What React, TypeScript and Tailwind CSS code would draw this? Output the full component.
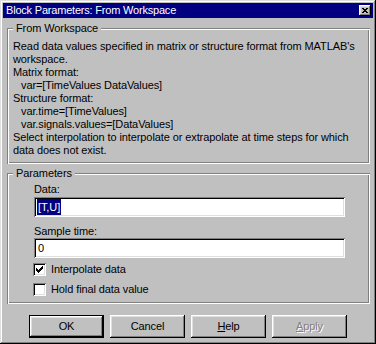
const raised =
  'shadow-[inset_-1px_-1px_#000,inset_1px_1px_#fff,inset_-2px_-2px_#808080,inset_2px_2px_#dfdfdf]';
const sunken =
  'shadow-[inset_1px_1px_#808080,inset_-1px_-1px_#fff,inset_2px_2px_#000,inset_-2px_-2px_#dfdfdf]';
const etched =
  'shadow-[inset_1px_1px_#808080,inset_-1px_-1px_#fff,inset_2px_2px_#fff,inset_-2px_-2px_#808080]';

function GroupBox({ title, className, children }: { title: string; className: string; children: React.ReactNode }) {
  return (
    <div className={`relative ml-[4px] w-[363px] ${etched} ${className}`}>
      <span className="absolute -top-[6px] left-[6px] bg-[#c0c0c0] px-[3px] leading-[13px]">{title}</span>
      {children}
    </div>
  );
}

function CheckBox({ checked, label }: { checked: boolean; label: string }) {
  return (
    <div className="flex items-center h-[13px] gap-[5px] -ml-[1px]">
      <div className={`w-[13px] h-[13px] bg-white ${sunken} flex items-center justify-center`}>
        {checked && (
          <svg width="7" height="7" viewBox="0 0 7 7" shapeRendering="crispEdges">
            <rect x="6" y="0" width="1" height="1" />
            <rect x="5" y="1" width="2" height="1" />
            <rect x="0" y="2" width="1" height="1" />
            <rect x="4" y="2" width="3" height="1" />
            <rect x="0" y="3" width="2" height="1" />
            <rect x="3" y="3" width="3" height="1" />
            <rect x="0" y="4" width="5" height="1" />
            <rect x="1" y="5" width="3" height="1" />
            <rect x="2" y="6" width="1" height="1" />
          </svg>
        )}
      </div>
      <span className="leading-[13px]">{label}</span>
    </div>
  );
}

function Button({ children, isDefault, disabled }: { children: React.ReactNode; isDefault?: boolean; disabled?: boolean }) {
  return (
    <button
      className={`w-[75px] h-[23px] flex items-center justify-center ${isDefault ? 'border border-black' : ''} ${
        disabled ? 'text-[#808080] [text-shadow:1px_1px_0_#fff]' : 'text-black'
      }`}
    >
      <span className={`w-full h-full flex items-center justify-center ${raised}`}>{children}</span>
    </button>
  );
}

export default function App() {
  return (
    <div
      className={`w-[376px] h-[344px] p-[3px] bg-[#c0c0c0] flex flex-col text-black text-[11px] tracking-[-0.1px] font-['Liberation_Sans',Arial,sans-serif] shadow-[inset_-1px_-1px_#000,inset_1px_1px_#dfdfdf,inset_-2px_-2px_#808080,inset_2px_2px_#fff]`}
    >
      {/* Title bar */}
      <div className="h-[15px] bg-[#000080] flex items-center justify-between pl-[3px] pr-[2px]">
        <span className="text-white leading-[15px] tracking-[-0.2px]">Block Parameters: From Workspace</span>
        <div className={`w-[12px] h-[11px] bg-[#c0c0c0] ${raised} flex items-center justify-center`}>
          <svg width="6" height="5" viewBox="0 0 6 5" shapeRendering="crispEdges">
            <rect x="0" y="0" width="2" height="1" />
            <rect x="4" y="0" width="2" height="1" />
            <rect x="1" y="1" width="4" height="1" />
            <rect x="2" y="2" width="2" height="1" />
            <rect x="1" y="3" width="4" height="1" />
            <rect x="0" y="4" width="2" height="1" />
            <rect x="4" y="4" width="2" height="1" />
          </svg>
        </div>
      </div>

      {/* Description */}
      <GroupBox title="From Workspace" className="mt-[10px] h-[136px] pt-[12px] pl-[6px]">
        <div className="leading-[13px]">
          <div>Read data values specified in matrix or structure format from MATLAB's</div>
          <div>workspace.</div>
          <div>Matrix format:</div>
          <div className="pl-[8px]">var=[TimeValues DataValues]</div>
          <div>Structure format:</div>
          <div className="pl-[8px]">var.time=[TimeValues]</div>
          <div className="pl-[8px]">var.signals.values=[DataValues]</div>
          <div>Select interpolation to interpolate or extrapolate at time steps for which</div>
          <div>data does not exist.</div>
        </div>
      </GroupBox>

      {/* Parameters */}
      <GroupBox title="Parameters" className="mt-[9px] h-[131px] pt-[10px] pl-[27px]">
        <div className="leading-[13px]">Data:</div>
        <div className={`mt-[1px] w-[311px] h-[20px] bg-white ${sunken} p-[2px] pl-[3px] flex`}>
          <span className="bg-[#000080] text-white leading-[16px] px-[1px]">[T,U]</span>
        </div>
        <div className="mt-[8px] leading-[13px]">Sample time:</div>
        <div className={`w-[311px] h-[20px] bg-white ${sunken} p-[2px] pl-[4px] leading-[16px]`}>0</div>
        <div className="mt-[5px] flex flex-col gap-[7px]">
          <CheckBox checked label="Interpolate data" />
          <CheckBox checked={false} label="Hold final data value" />
        </div>
      </GroupBox>

      {/* Buttons */}
      <div className="mt-[11px] pl-[26px] flex gap-[6px]">
        <Button isDefault>OK</Button>
        <Button>Cancel</Button>
        <Button>
          <span>
            <u>H</u>elp
          </span>
        </Button>
        <Button disabled>
          <span>
            <u>A</u>pply
          </span>
        </Button>
      </div>
    </div>
  );
}
